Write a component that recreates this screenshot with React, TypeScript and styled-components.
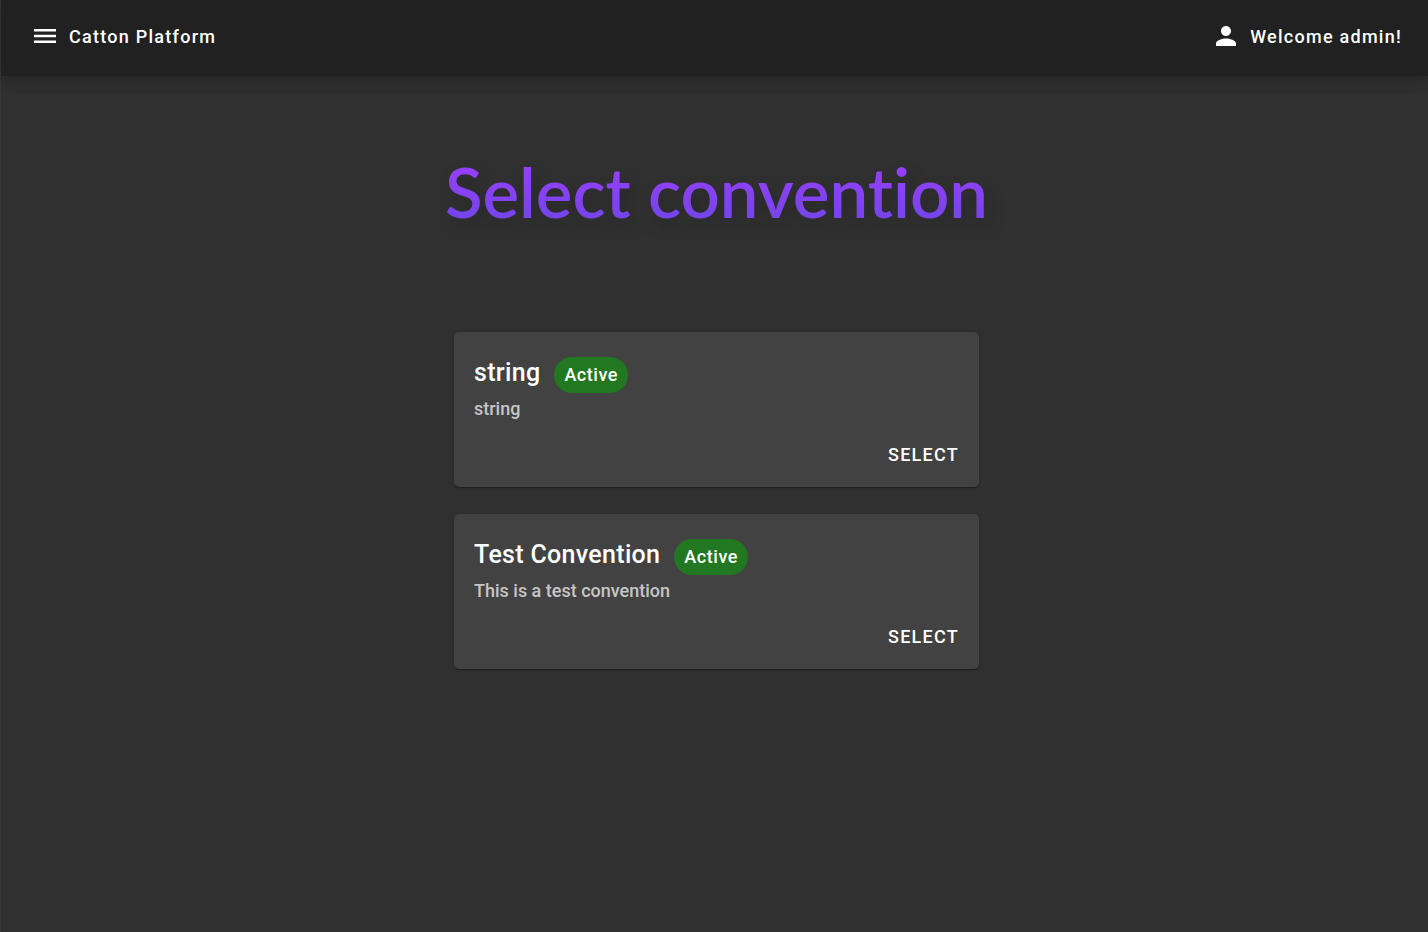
import React from "react";
import styled, { createGlobalStyle } from "styled-components";

const GlobalStyle = createGlobalStyle`
  *, *::before, *::after { box-sizing: border-box; }
  body {
    margin: 0;
    background: #303030;
    color: #fff;
    font-family: Roboto, "Liberation Sans", sans-serif;
    font-weight: 500;
  }
`;

const Page = styled.div`
  min-height: 100vh;
  border-left: 1px solid #383838;
`;

const TopBar = styled.header`
  display: flex;
  align-items: center;
  justify-content: space-between;
  height: 76px;
  padding: 0 26px 4px 32px;
  background: #212121;
  box-shadow: 0 3px 6px rgba(0, 0, 0, 0.04), 0 5px 14px rgba(0, 0, 0, 0.1),
    0 1px 18px rgba(0, 0, 0, 0.1);
`;

const BarButton = styled.button<{ $gap: number }>`
  display: flex;
  align-items: center;
  gap: ${(p) => p.$gap}px;
  padding: 0;
  border: 0;
  background: none;
  color: inherit;
  font: 500 18px/24px Roboto, "Liberation Sans", sans-serif;
  letter-spacing: 0.07em;
  cursor: pointer;
`;

const BarLabel = styled.span`
  padding-top: 2px;
`;

const Icon = styled.svg`
  display: block;
  fill: currentColor;
`;

const Main = styled.main`
  display: flex;
  flex-direction: column;
  align-items: center;
  padding: 74px 20px 40px 24px;
`;

const Heading = styled.h1`
  margin: 0 0 98px;
  font: 600 69px/84px Lato, sans-serif;
  font-variant-ligatures: none;
  color: transparent;
  background: linear-gradient(#a13dff, #6b46e5);
  background-clip: text;
  -webkit-background-clip: text;
  filter: drop-shadow(5px 8px 8px rgba(0, 0, 0, 0.18));
`;

const CardList = styled.ul`
  display: flex;
  flex-direction: column;
  gap: 27px;
  width: 100%;
  max-width: 525px;
  margin: 0;
  padding: 0;
  list-style: none;
`;

const Card = styled.li`
  display: flex;
  flex-direction: column;
  padding: 25px 20px 19px;
  border-radius: 5px;
  background: #424242;
  box-shadow: 0 2px 1px -1px rgba(0, 0, 0, 0.2), 0 1px 1px rgba(0, 0, 0, 0.14),
    0 1px 4px rgba(0, 0, 0, 0.12);
`;

const TitleRow = styled.div`
  display: flex;
  align-items: center;
  gap: 14px;
`;

const CardTitle = styled.h2`
  margin: 0;
  padding-bottom: 4px;
  font-size: 25px;
  font-weight: 500;
  line-height: 32px;
  letter-spacing: 0.0125em;
`;

const Badge = styled.span`
  padding: 6px 10px;
  border-radius: 18px;
  background: #217821;
  font-size: 18px;
  line-height: 24px;
  letter-spacing: 0.03em;
`;

const Description = styled.p`
  margin: 4px 0 21px;
  color: #c6c6c6;
  font-size: 18px;
  line-height: 24px;
`;

const SelectButton = styled.button`
  align-self: flex-end;
  padding: 0;
  border: 0;
  background: none;
  color: inherit;
  font: 500 18px/26px Roboto, "Liberation Sans", sans-serif;
  letter-spacing: 0.07em;
  text-transform: uppercase;
  cursor: pointer;
`;

const conventions = [
  { name: "string", description: "string", status: "Active" },
  { name: "Test Convention", description: "This is a test convention", status: "Active" },
];

export default function App() {
  return (
    <Page>
      <GlobalStyle />
      <TopBar>
        <BarButton type="button" $gap={12}>
          <Icon width="24" height="24" viewBox="0 0 24 24" aria-hidden="true">
            <path d="M1 5h22v2.600H1zM1 10.800h22v2.500H1zM1 16.500h22V19H1z" />
          </Icon>
          <BarLabel>Catton Platform</BarLabel>
        </BarButton>
        <BarButton type="button" $gap={9}>
          <Icon width="30" height="30" viewBox="0 0 24 24" aria-hidden="true">
            <path d="M12 12c2.210 0 4-1.790 4-4s-1.790-4-4-4-4 1.790-4 4 1.790 4 4 4zm0 2c-2.670 0-8 1.340-8 4v2h16v-2c0-2.660-5.330-4-8-4z" />
          </Icon>
          <BarLabel>Welcome admin!</BarLabel>
        </BarButton>
      </TopBar>
      <Main>
        <Heading>Select convention</Heading>
        <CardList>
          {conventions.map((c) => (
            <Card key={c.name}>
              <TitleRow>
                <CardTitle>{c.name}</CardTitle>
                <Badge>{c.status}</Badge>
              </TitleRow>
              <Description>{c.description}</Description>
              <SelectButton type="button">Select</SelectButton>
            </Card>
          ))}
        </CardList>
      </Main>
    </Page>
  );
}
